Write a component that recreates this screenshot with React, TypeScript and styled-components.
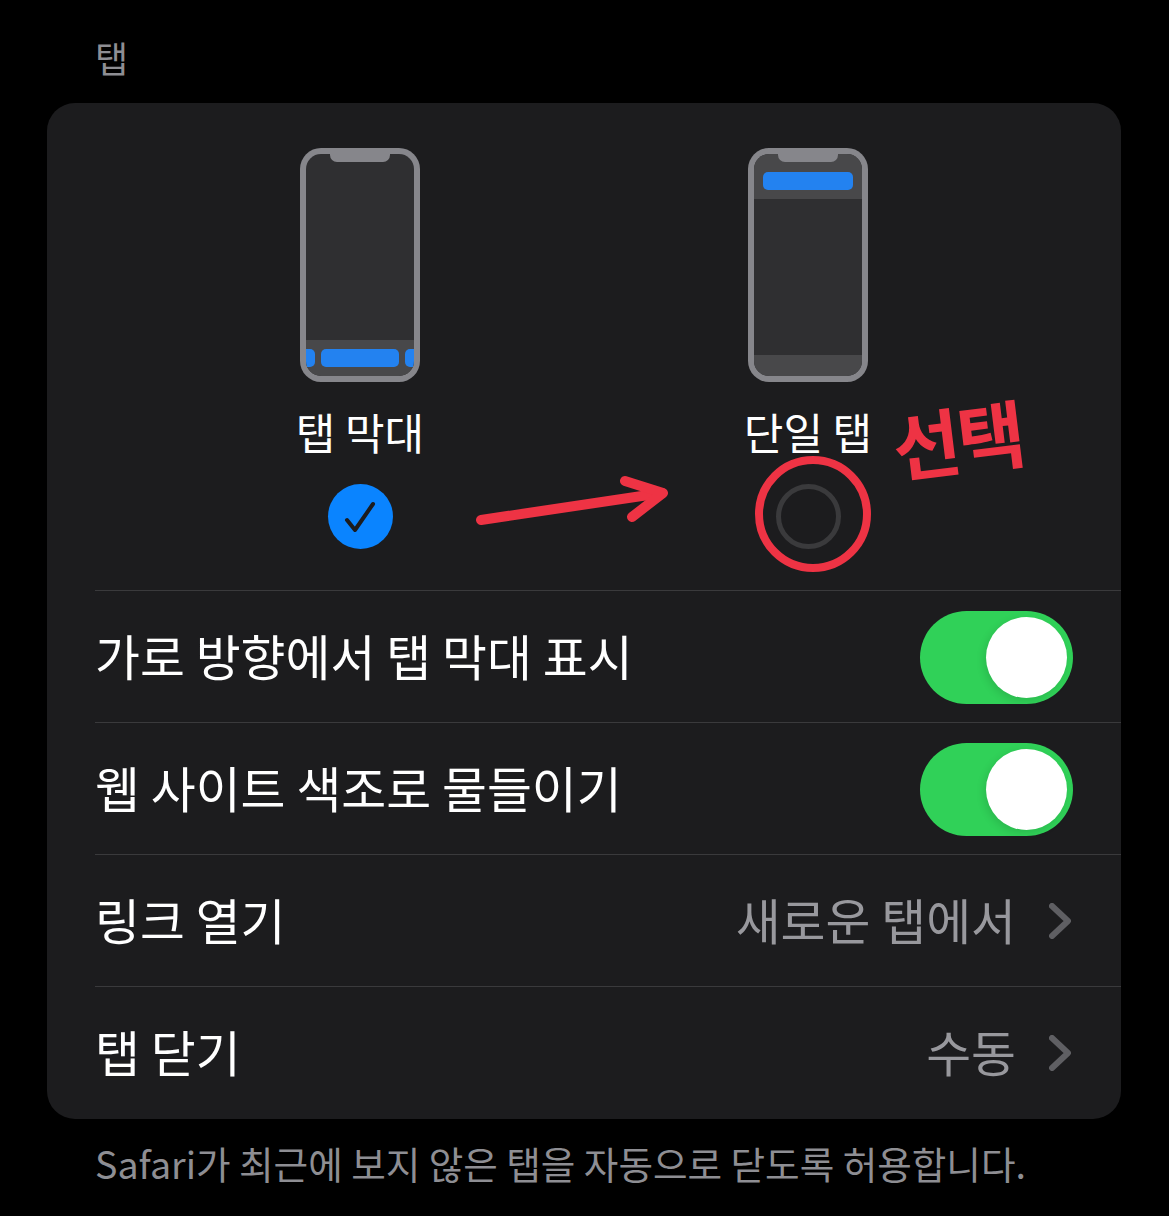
import React from 'react';
import styled, { createGlobalStyle } from 'styled-components';

const GlobalStyle = createGlobalStyle`
  html, body {
    margin: 0;
    background: #000;
  }
  body {
    font-family: "Noto Sans CJK KR", "Noto Sans", sans-serif;
  }
`;

const Page = styled.div`
  position: relative;
  width: 1169px;
  height: 1216px;
  overflow: hidden;
  background: #000;
`;

const SectionTitle = styled.div`
  height: 103px;
  box-sizing: border-box;
  padding: 33px 0 0 95px;
  font-size: 36px;
  line-height: 48px;
  color: #8e8e93;
`;

const Card = styled.div`
  position: relative;
  width: 1074px;
  height: 1016px;
  margin-left: 47px;
  border-radius: 28px;
  background: #1c1c1e;
`;

const Chooser = styled.div`
  display: flex;
  justify-content: center;
  height: 487px;
  box-sizing: border-box;
  padding-top: 45px;
`;

const Option = styled.div`
  display: flex;
  flex-direction: column;
  align-items: center;
  width: 448px;
`;

const OptionLabel = styled.div`
  margin-top: 21px;
  height: 56px;
  font-size: 43px;
  line-height: 56px;
  color: #fff;
`;

const Radio = styled.div<{ $checked?: boolean }>`
  display: flex;
  align-items: center;
  justify-content: center;
  width: 65px;
  height: 65px;
  margin-top: 25px;
  box-sizing: border-box;
  border-radius: 50%;
  background: ${(p) => (p.$checked ? '#0a84ff' : 'transparent')};
  border: ${(p) => (p.$checked ? 'none' : '5px solid #3a3a3c')};
`;

const Row = styled.div`
  display: flex;
  align-items: center;
  justify-content: space-between;
  height: 132px;
  box-sizing: border-box;
  margin-left: 48px;
  padding: 1px 48px 0 0;
  border-top: 1px solid #3a3a3c;
`;

const RowLabel = styled.span`
  margin-bottom: 4px;
  font-size: 48.8px;
  line-height: 64px;
  color: #fff;
`;

const RowValue = styled.span`
  display: flex;
  align-items: center;
  gap: 33px;
  margin-right: 2px;
  font-size: 48.8px;
  line-height: 64px;
  color: #98989d;

  span {
    margin-bottom: 4px;
  }
`;

const Toggle = styled.div`
  display: flex;
  justify-content: flex-end;
  align-items: center;
  width: 153px;
  height: 93px;
  box-sizing: border-box;
  padding-right: 6px;
  border-radius: 47px;
  background: #30d158;
`;

const Knob = styled.div`
  width: 81px;
  height: 81px;
  border-radius: 50%;
  background: #fff;
  box-shadow: -2px 3px 8px rgba(0, 0, 0, 0.12);
`;

const Footnote = styled.div`
  padding: 18px 0 0 95px;
  font-size: 37.6px;
  line-height: 52px;
  white-space: nowrap;
  color: #8e8e93;
`;

const Scribble = styled.svg`
  position: absolute;
  left: 0;
  top: 0;
  pointer-events: none;
`;

const HandNote = styled.div`
  position: absolute;
  left: 845px;
  top: 289px;
  font-size: 74px;
  line-height: 90px;
  font-weight: 700;
  letter-spacing: -3px;
  color: #ee3344;
  transform: rotate(-7deg);
`;

const PhoneFigure = ({ bar }: { bar: 'bottom' | 'top' }) => (
  <svg width="120" height="234" viewBox="0 0 120 234" fill="none">
    <defs>
      <clipPath id={`screen-${bar}`}>
        <rect x="6" y="6" width="108" height="222" rx="15" />
      </clipPath>
    </defs>
    <rect width="120" height="234" rx="21" fill="#86868b" />
    <g clipPath={`url(#screen-${bar})`}>
      <rect x="6" y="6" width="108" height="222" fill="#2f2f31" />
      {bar === 'bottom' ? (
        <>
          <rect x="6" y="192" width="108" height="36" fill="#48484a" />
          <rect x="-10" y="201" width="25" height="18" rx="5" fill="#2382f0" />
          <rect x="21" y="201" width="78" height="18" rx="5" fill="#2382f0" />
          <rect x="105" y="201" width="25" height="18" rx="5" fill="#2382f0" />
        </>
      ) : (
        <>
          <rect x="6" y="6" width="108" height="45" fill="#48484a" />
          <rect x="15" y="24" width="90" height="18" rx="5" fill="#2382f0" />
          <rect x="6" y="207" width="108" height="21" fill="#48484a" />
        </>
      )}
    </g>
    <path d="M30 4h60v3a7 7 0 0 1-7 7H37a7 7 0 0 1-7-7z" fill="#86868b" />
  </svg>
);

const Check = () => (
  <svg width="32" height="32" viewBox="0 0 32 32" fill="none">
    <path d="M3 19l8 10L29 3" stroke="#1c1c1e" strokeWidth="4" strokeLinecap="round" strokeLinejoin="round" />
  </svg>
);

const Chevron = () => (
  <svg width="22" height="36" viewBox="0 0 22 36" fill="none">
    <path d="M3 3l16 15L3 33" stroke="#5f5f63" strokeWidth="6" strokeLinecap="round" strokeLinejoin="round" />
  </svg>
);

const App = () => {
  return (
    <Page>
      <GlobalStyle />
      <SectionTitle>탭</SectionTitle>
      <Card>
        <Chooser>
          <Option>
            <PhoneFigure bar="bottom" />
            <OptionLabel>탭 막대</OptionLabel>
            <Radio $checked>
              <Check />
            </Radio>
          </Option>
          <Option>
            <PhoneFigure bar="top" />
            <OptionLabel>단일 탭</OptionLabel>
            <Radio />
          </Option>
        </Chooser>
        <Row>
          <RowLabel>가로 방향에서 탭 막대 표시</RowLabel>
          <Toggle>
            <Knob />
          </Toggle>
        </Row>
        <Row>
          <RowLabel>웹 사이트 색조로 물들이기</RowLabel>
          <Toggle>
            <Knob />
          </Toggle>
        </Row>
        <Row>
          <RowLabel>링크 열기</RowLabel>
          <RowValue>
            <span>새로운 탭에서</span>
            <Chevron />
          </RowValue>
        </Row>
        <Row>
          <RowLabel>탭 닫기</RowLabel>
          <RowValue>
            <span>수동</span>
            <Chevron />
          </RowValue>
        </Row>
        <HandNote>선택</HandNote>
      </Card>
      <Footnote>Safari가 최근에 보지 않은 탭을 자동으로 닫도록 허용합니다.</Footnote>
      <Scribble width="1169" height="1216" viewBox="0 0 1169 1216" fill="none">
        <path d="M481 520L662 493" stroke="#ee3344" strokeWidth="10" strokeLinecap="round" />
        <path d="M625 481L663 493L632 517" stroke="#ee3344" strokeWidth="10" strokeLinecap="round" strokeLinejoin="round" />
        <ellipse cx="813" cy="514" rx="54" ry="54" stroke="#ee3344" strokeWidth="8" />
      </Scribble>
    </Page>
  );
};

export default App;
